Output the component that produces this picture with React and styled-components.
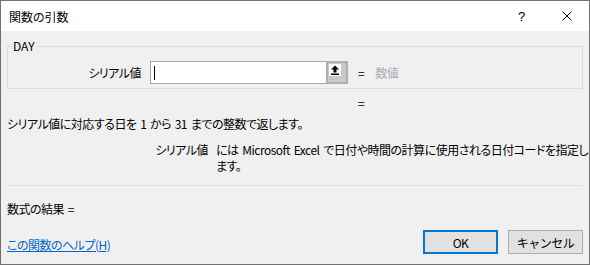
import React from 'react';
import styled, { createGlobalStyle } from 'styled-components';

const GlobalStyle = createGlobalStyle`
  html, body {
    margin: 0;
    padding: 0;
    background: #f0f0f0;
  }
  body {
    font-family: 'Noto Sans CJK JP', 'Noto Sans', sans-serif;
    font-size: 12px;
    color: #000;
    font-feature-settings: 'palt';
  }
`;

const Window = styled.div`
  width: 590px;
  height: 265px;
  box-sizing: border-box;
  border: 1px solid #707070;
  background: #f0f0f0;
  display: flex;
  flex-direction: column;
`;

const TitleBar = styled.div`
  height: 30px;
  flex: none;
  background: #fff;
  display: flex;
  align-items: center;
  padding-left: 8px;
`;

const Title = styled.span`
  flex: 1;
  font-size: 12px;
  line-height: 15px;
`;

const TitleButton = styled.div`
  width: 45px;
  height: 30px;
  display: flex;
  align-items: center;
  justify-content: center;
  font-family: 'Liberation Sans', sans-serif;
  font-size: 13px;
`;

const Body = styled.div`
  flex: 1;
  display: flex;
  flex-direction: column;
  padding: 0 6px;
  letter-spacing: -0.5px;
  word-spacing: 1.5px;
`;

const Group = styled.fieldset`
  margin: 8px 0 0;
  padding: 8px 0 4px;
  border: 1px solid #dcdcdc;
  min-width: 0;
`;

const Legend = styled.legend`
  margin-left: 4px;
  padding: 0 1px;
  line-height: 14px;
  letter-spacing: 0;
`;

const ArgRow = styled.div`
  display: grid;
  grid-template-columns: 142px 198px auto auto;
  justify-content: start;
  align-items: center;
`;

const ArgLabel = styled.span`
  text-align: right;
  padding-right: 9px;
  line-height: 15px;
`;

const InputBox = styled.div`
  display: flex;
  height: 23px;
`;

const Field = styled.div`
  flex: 1;
  background: #fff;
  border: 1px solid #a9a9a9;
  border-right: 0;
  display: flex;
  align-items: center;
  padding-left: 3px;
`;

const Caret = styled.span`
  width: 1px;
  height: 14px;
  background: #000;
`;

const RefButton = styled.div`
  width: 22px;
  box-sizing: border-box;
  border: 2px solid #b0b0b0;
  background: #c9c9c9;
  padding: 1px;
`;

const IconSquare = styled.div`
  width: 12px;
  height: 12px;
  background: #fff;
  display: flex;
`;

const Equals = styled.span`
  margin-left: 10px;
  line-height: 15px;
`;

const Hint = styled.span`
  margin-left: 11px;
  color: #ababb6;
  line-height: 15px;
`;

const ResultRow = styled.div`
  margin-top: 6px;
  padding-left: 351px;
  line-height: 15px;
`;

const Description = styled.div`
  margin-top: 6px;
  line-height: 15px;
`;

const ArgHelp = styled.div`
  margin-top: 11px;
  margin-right: -5px;
  display: grid;
  grid-template-columns: 201px 1fr;
  column-gap: 8px;
  line-height: 16px;
`;

const ArgName = styled.span`
  text-align: right;
`;

const ArgText = styled.span`
  white-space: nowrap;
`;

const Separator = styled.div`
  margin-top: 11px;
  height: 1px;
  background: #dfdfdf;
`;

const Formula = styled.div`
  margin-top: 15px;
  line-height: 15px;
`;

const Footer = styled.div`
  margin-top: auto;
  padding-bottom: 10px;
  display: flex;
  align-items: flex-end;
  gap: 10px;
`;

const HelpLink = styled.a`
  flex: 1;
  color: #0066cc;
  text-decoration: underline;
  line-height: 15px;
  margin-bottom: 2px;
  cursor: pointer;
`;

const DialogButton = styled.button`
  width: 75px;
  height: 24px;
  box-sizing: border-box;
  background: #e1e1e1;
  border: ${p => (p.$primary ? '2px solid #0078d7' : '1px solid #adadad')};
  font-family: inherit;
  font-size: 12px;
  letter-spacing: -0.5px;
  color: #000;
  padding: 0;
`;

const UploadIcon = () => (
  <svg width="12" height="12" viewBox="0 0 12 12">
    <polygon points="6,1.5 10,5.5 7.5,5.5 7.5,8.5 4.5,8.5 4.5,5.5 2,5.5" fill="#000" />
    <rect x="2" y="9.5" width="8" height="1.5" fill="#000" />
  </svg>
);

const CloseIcon = () => (
  <svg width="10" height="10" viewBox="0 0 10 10">
    <path d="M0.5 0.5 L9.5 9.5 M9.5 0.5 L0.5 9.5" stroke="#000" strokeWidth="1" fill="none" />
  </svg>
);

export default function App() {
  return (
    <>
      <GlobalStyle />
      <Window>
        <TitleBar>
          <Title>関数の引数</Title>
          <TitleButton>?</TitleButton>
          <TitleButton><CloseIcon /></TitleButton>
        </TitleBar>
        <Body>
          <Group>
            <Legend>DAY</Legend>
            <ArgRow>
              <ArgLabel>シリアル値</ArgLabel>
              <InputBox>
                <Field><Caret /></Field>
                <RefButton>
                  <IconSquare><UploadIcon /></IconSquare>
                </RefButton>
              </InputBox>
              <Equals>=</Equals>
              <Hint>数値</Hint>
            </ArgRow>
          </Group>
          <ResultRow>=</ResultRow>
          <Description>シリアル値に対応する日を 1 から 31 までの整数で返します。</Description>
          <ArgHelp>
            <ArgName>シリアル値</ArgName>
            <ArgText>
              には Microsoft Excel で日付や時間の計算に使用される日付コードを指定し<br />ます。
            </ArgText>
          </ArgHelp>
          <Separator />
          <Formula>数式の結果 =</Formula>
          <Footer>
            <HelpLink>この関数のヘルプ(H)</HelpLink>
            <DialogButton $primary>OK</DialogButton>
            <DialogButton>キャンセル</DialogButton>
          </Footer>
        </Body>
      </Window>
    </>
  );
}
